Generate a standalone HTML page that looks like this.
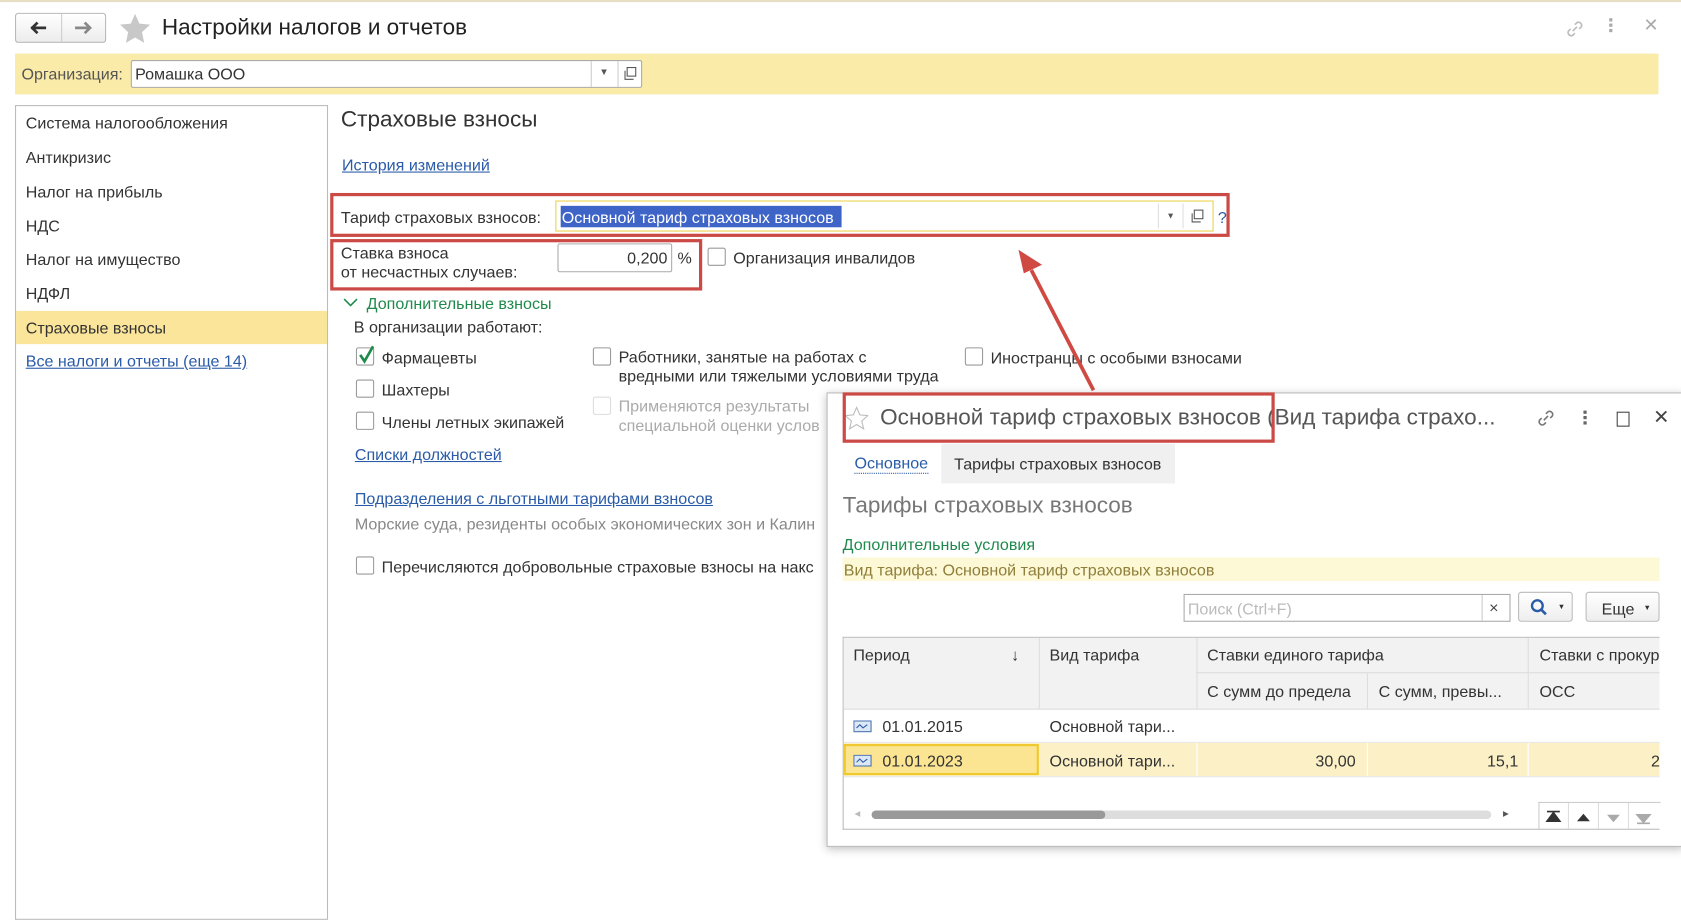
<!DOCTYPE html>
<html><head><meta charset="utf-8"><style>
html,body{margin:0;padding:0;width:1681px;height:902px;overflow:hidden;background:#fff}
#w{position:absolute;left:0;top:0;width:1568px;height:841px;transform:scale(1.07207);transform-origin:0 0;font-family:"Liberation Sans",sans-serif;color:#333;font-size:15px}
.a{position:absolute;white-space:nowrap}
.lnk{color:#2a5ba8;text-decoration:underline}
.cb{position:absolute;width:15px;height:15px;border:1px solid #9a9a9a;border-radius:2px;background:#fff}
.g{color:#1f8a4c}
.red{position:absolute;border:3px solid #cc4a45;box-sizing:border-box}
#t{position:absolute;left:0;top:1px;width:1568px;height:841px}
</style></head><body><div id="w">
<div class="a" style="left:0;top:0;width:1568px;height:2px;background:#e6dfc4"></div>
<!-- nav -->
<div class="a" style="left:14px;top:12px;width:85px;height:28px;border:1px solid #b9b9b9;border-radius:3px;background:linear-gradient(#fff,#ececec);box-sizing:border-box"></div>
<div class="a" style="left:57px;top:13px;width:1px;height:26px;background:#ccc"></div>
<svg class="a" style="left:26px;top:18px" width="20" height="16"><path d="M3 8h14M9 3L4 8l5 5" stroke="#333" stroke-width="2.5" fill="none"/></svg>
<svg class="a" style="left:67px;top:18px" width="20" height="16"><path d="M3 8h14M12 3l5 5-5 5" stroke="#888" stroke-width="2.5" fill="none"/></svg>
<svg class="a" style="left:112px;top:12px" width="28" height="28"><path d="M14 1l4 9 10 1-7.5 7 2 10L14 23l-8.5 5 2-10L0 11l10-1z" fill="#c8c8c8"/></svg>
<div id="t">
<div class="a" style="left:151px;top:13px;font-size:21px;color:#222">Настройки налогов и отчетов</div>
<svg class="a" style="left:1459px;top:16px" width="20" height="20"><path d="M8 12l4-4M6 10l-2 2a3 3 0 004 4l2-2M14 10l2-2a3 3 0 00-4-4l-2 2" stroke="#bbb" stroke-width="1.5" fill="none"/></svg>
<div class="a" style="left:1501px;top:16px;width:3px;height:3px;background:#aaa;box-shadow:0 5px #aaa,0 10px #aaa"></div>
<div class="a" style="left:1533px;top:13px;font-size:17px;color:#aaa">✕</div>
</div>
<!-- org bar -->
<div class="a" style="left:14px;top:50px;width:1533px;height:38px;background:#faeba8"></div>
<div class="a" style="left:20px;top:61px;color:#555">Организация:</div>
<div class="a" style="left:122px;top:56px;width:477px;height:26px;background:#fff;border:1px solid #aaa;box-sizing:border-box;border-radius:2px"></div>
<div class="a" style="left:126px;top:61px;color:#333">Ромашка ООО</div>
<div class="a" style="left:551px;top:57px;width:1px;height:24px;background:#ccc"></div>
<div class="a" style="left:576px;top:57px;width:1px;height:24px;background:#ccc"></div>
<div class="a" style="left:559px;top:62px;font-size:9px;color:#555">▼</div>
<svg class="a" style="left:581px;top:62px" width="14" height="14"><rect x="4" y="1" width="8" height="8" fill="none" stroke="#555"/><path d="M2 4v8h8" fill="none" stroke="#555"/></svg>
<!-- left panel -->
<div class="a" style="left:14px;top:98px;width:292px;height:760px;border:1px solid #bbb;box-sizing:border-box"></div>
<div class="a" style="left:15px;top:290px;width:290px;height:31px;background:#fae59a"></div>
<div id="t">
<div class="a" style="left:24px;top:106px">Система налогообложения</div>
<div class="a" style="left:24px;top:138px">Антикризис</div>
<div class="a" style="left:24px;top:170px">Налог на прибыль</div>
<div class="a" style="left:24px;top:202px">НДС</div>
<div class="a" style="left:24px;top:233px">Налог на имущество</div>
<div class="a" style="left:24px;top:265px">НДФЛ</div>
<div class="a" style="left:24px;top:297px">Страховые взносы</div>
<div class="a lnk" style="left:24px;top:328px">Все налоги и отчеты (еще 14)</div>
<div class="a" style="left:318px;top:99px;font-size:21px;color:#333">Страховые взносы</div>
<div class="a lnk" style="left:319px;top:145px">История изменений</div>
</div>
<!-- content -->
<div class="red" style="left:308px;top:180px;width:839px;height:41px"></div>
<div class="a" style="left:318px;top:195px">Тариф страховых взносов:</div>
<div class="a" style="left:518px;top:187px;width:614px;height:29px;border:1px solid #ecd24a;box-sizing:border-box;background:#fff"></div>
<div class="a" style="left:523px;top:192px;width:262px;height:20px;background:#3e64c7"></div>
<div class="a" style="left:524px;top:195px;color:#fff">Основной тариф страховых взносов</div>
<div class="a" style="left:1080px;top:190px;width:1px;height:23px;background:#ddd"></div>
<div class="a" style="left:1103px;top:190px;width:1px;height:23px;background:#ddd"></div>
<div class="a" style="left:1088px;top:197px;font-size:8px;color:#555">▼</div>
<svg class="a" style="left:1110px;top:195px" width="14" height="14"><rect x="4" y="1" width="8" height="8" fill="none" stroke="#555"/><path d="M2 4v8h8" fill="none" stroke="#555"/></svg>
<div class="a" style="left:1136px;top:195px;color:#2a5ba8">?</div>
<div class="red" style="left:308px;top:223px;width:347px;height:48px"></div>
<div class="a" style="left:318px;top:228px">Ставка взноса</div>
<div class="a" style="left:318px;top:246px">от несчастных случаев:</div>
<div class="a" style="left:520px;top:227px;width:107px;height:27px;border:1px solid #aaa;box-sizing:border-box;border-radius:2px"></div>
<div class="a" style="left:585px;top:233px">0,200</div>
<div class="a" style="left:632px;top:233px">%</div>
<div class="cb" style="left:660px;top:231px"></div>
<div class="a" style="left:684px;top:233px">Организация инвалидов</div>
<svg class="a" style="left:320px;top:277px" width="14" height="10"><path d="M1 2l6 6 6-6" stroke="#1f8a4c" stroke-width="1.5" fill="none"/></svg>
<div class="a g" style="left:342px;top:275px">Дополнительные взносы</div>
<div class="a" style="left:330px;top:297px">В организации работают:</div>
<div class="cb" style="left:332px;top:324px"></div>
<svg class="a" style="left:332px;top:320px" width="20" height="20"><path d="M4 11l4 6 8-14" stroke="#1f8a4c" stroke-width="2.5" fill="none"/></svg>
<div class="a" style="left:356px;top:326px">Фармацевты</div>
<div class="cb" style="left:332px;top:354px"></div>
<div class="a" style="left:356px;top:356px">Шахтеры</div>
<div class="cb" style="left:332px;top:384px"></div>
<div class="a" style="left:356px;top:386px">Члены летных экипажей</div>
<div class="cb" style="left:553px;top:324px"></div>
<div class="a" style="left:577px;top:325px;line-height:18px">Работники, занятые на работах с<br>вредными или тяжелыми условиями труда</div>
<div class="cb" style="left:553px;top:370px;border-color:#ddd"></div>
<div class="a" style="left:577px;top:371px;line-height:18px;color:#aaa">Применяются результаты<br>специальной оценки услов</div>
<div class="cb" style="left:900px;top:324px"></div>
<div class="a" style="left:924px;top:326px">Иностранцы с особыми взносами</div>
<div class="a lnk" style="left:331px;top:416px">Списки должностей</div>
<div class="a lnk" style="left:331px;top:457px">Подразделения с льготными тарифами взносов</div>
<div class="a" style="left:331px;top:481px;color:#888">Морские суда, резиденты особых экономических зон и Калин</div>
<div class="cb" style="left:332px;top:519px"></div>
<div class="a" style="left:356px;top:521px">Перечисляются добровольные страховые взносы на накс</div>
<!-- dialog -->
<div class="a" style="left:771px;top:366px;width:800px;height:424px;background:#fff;border:1px solid #bbb;box-sizing:border-box;box-shadow:0 2px 8px rgba(0,0,0,.25)"></div>
<svg class="a" style="left:788px;top:379px" width="22" height="22"><path d="M11 1l3 7 7.5.7-5.7 5 1.8 7.3L11 17l-6.6 4 1.8-7.3L.5 8.7 8 8z" fill="none" stroke="#bbb"/></svg>
<div class="a" style="left:821px;top:378px;font-size:21px;color:#555">Основной тариф страховых взносов (Вид тарифа страхо...</div>
<div class="red" style="left:786px;top:366px;width:403px;height:47px"></div>
<svg class="a" style="left:1432px;top:380px" width="20" height="20"><path d="M8 12l4-4M6 10l-2 2a3 3 0 004 4l2-2M14 10l2-2a3 3 0 00-4-4l-2 2" stroke="#777" stroke-width="1.5" fill="none"/></svg>
<div class="a" style="left:1477px;top:383px;width:3px;height:3px;background:#666;box-shadow:0 5px #666,0 10px #666"></div>
<div class="a" style="left:1508px;top:384px;width:10px;height:12px;border:1.5px solid #444"></div>
<div class="a" style="left:1542px;top:379px;font-size:18px;color:#444">✕</div>
<div class="a" style="left:878px;top:414px;width:218px;height:37px;background:#f0f0f0"></div>
<div class="a" style="left:797px;top:425px;color:#2a5ba8;border-bottom:1px dotted #2a5ba8;line-height:16px">Основное</div>
<div class="a" style="left:890px;top:425px;color:#333">Тарифы страховых взносов</div>
<div class="a" style="left:786px;top:460px;font-size:21px;color:#777">Тарифы страховых взносов</div>
<div class="a g" style="left:786px;top:500px">Дополнительные условия</div>
<div class="a" style="left:786px;top:520px;width:762px;height:22px;background:#fdf8d6"></div>
<div class="a" style="left:787px;top:524px;color:#8f7f3a">Вид тарифа: Основной тариф страховых взносов</div>
<div class="a" style="left:1104px;top:554px;width:305px;height:26px;border:1px solid #aaa;box-sizing:border-box"></div>
<div class="a" style="left:1382px;top:555px;width:1px;height:24px;background:#ccc"></div>
<div class="a" style="left:1108px;top:560px;color:#bbb">Поиск (Ctrl+F)</div>
<div class="a" style="left:1389px;top:559px;color:#444">×</div>
<div class="a" style="left:1416px;top:552px;width:51px;height:28px;border:1px solid #bbb;border-radius:3px;box-sizing:border-box;background:linear-gradient(#fff,#eee)"></div>
<svg class="a" style="left:1427px;top:558px" width="18" height="18"><circle cx="7" cy="7" r="5" stroke="#2a5ba8" stroke-width="2.2" fill="none"/><path d="M10 10l5 5" stroke="#2a5ba8" stroke-width="2.5"/></svg>
<div class="a" style="left:1453px;top:563px;font-size:7px">▼</div>
<div class="a" style="left:1479px;top:552px;width:69px;height:28px;border:1px solid #bbb;border-radius:3px;box-sizing:border-box;background:linear-gradient(#fff,#eee)"></div>
<div class="a" style="left:1494px;top:560px">Еще</div>
<div class="a" style="left:1533px;top:564px;font-size:7px">▼</div>
<!-- table -->
<div class="a" style="left:786px;top:594px;width:762px;height:180px;border:1px solid #bbb;border-right:none;box-sizing:border-box"></div>
<div class="a" style="left:787px;top:595px;width:761px;height:66px;background:#f2f2f2;border-bottom:1px solid #ddd"></div>
<div class="a" style="left:969px;top:595px;width:1px;height:66px;background:#ddd"></div>
<div class="a" style="left:1116px;top:595px;width:1px;height:66px;background:#ddd"></div>
<div class="a" style="left:1425px;top:595px;width:1px;height:66px;background:#ddd"></div>
<div class="a" style="left:1116px;top:627px;width:432px;height:1px;background:#ddd"></div>
<div class="a" style="left:1275px;top:628px;width:1px;height:33px;background:#ddd"></div>
<div class="a" style="left:796px;top:603px">Период</div>
<div class="a" style="left:943px;top:603px">↓</div>
<div class="a" style="left:979px;top:603px">Вид тарифа</div>
<div class="a" style="left:1126px;top:603px">Ставки единого тарифа</div>
<div class="a" style="left:1436px;top:603px">Ставки с прокур</div>
<div class="a" style="left:1126px;top:637px">С сумм до предела</div>
<div class="a" style="left:1286px;top:637px">С сумм, превы...</div>
<div class="a" style="left:1436px;top:637px">ОСС</div>
<div class="a" style="left:787px;top:692px;width:761px;height:1px;background:#e6e6e6"></div>
<svg class="a" style="left:796px;top:672px" width="18" height="12"><rect x=".5" y=".5" width="16" height="10" fill="#dde8f6" stroke="#4a72b0"/><path d="M3 7l3-3 3 3 4-3" stroke="#2a5ba8" fill="none"/></svg>
<div class="a" style="left:823px;top:670px">01.01.2015</div>
<div class="a" style="left:979px;top:670px">Основной тари...</div>
<div class="a" style="left:787px;top:693px;width:761px;height:31px;background:#fcf1c6"></div>
<div class="a" style="left:787px;top:694px;width:182px;height:29px;background:#fbe592;border:2px solid #f0c830;box-sizing:border-box"></div>
<div class="a" style="left:1116px;top:693px;width:1px;height:31px;background:#fff"></div>
<div class="a" style="left:1275px;top:693px;width:1px;height:31px;background:#fff"></div>
<div class="a" style="left:1425px;top:693px;width:1px;height:31px;background:#fff"></div>
<svg class="a" style="left:796px;top:704px" width="18" height="12"><rect x=".5" y=".5" width="16" height="10" fill="#dde8f6" stroke="#4a72b0"/><path d="M3 7l3-3 3 3 4-3" stroke="#2a5ba8" fill="none"/></svg>
<div class="a" style="left:823px;top:702px">01.01.2023</div>
<div class="a" style="left:979px;top:702px">Основной тари...</div>
<div class="a" style="left:1227px;top:702px">30,00</div>
<div class="a" style="left:1387px;top:702px">15,1</div>
<div class="a" style="left:1540px;top:702px">2</div>
<div class="a" style="left:787px;top:724px;width:761px;height:1px;background:#e6e6e6"></div>
<div class="a" style="left:797px;top:755px;font-size:7px;color:#bbb">◀</div>
<div class="a" style="left:813px;top:756px;width:578px;height:8px;border-radius:4px;background:#ddd"></div>
<div class="a" style="left:813px;top:756px;width:218px;height:8px;border-radius:4px;background:#999"></div>
<div class="a" style="left:1402px;top:755px;font-size:7px;color:#555">▶</div>
<div class="a" style="left:1435px;top:748px;width:113px;height:25px;border-left:1px solid #ccc;border-top:1px solid #ccc"></div>
<svg class="a" style="left:1435px;top:748px" width="113" height="25"><path d="M8 9h12M14 10l-6 8h12z" fill="#333" stroke="#333" stroke-width="1.5"/><path d="M42 11l-6 7h12z" fill="#333"/><path d="M64 12h12l-6 7z" fill="#aaa"/><path d="M92 12h12l-6 7z M92 20h12" fill="#aaa" stroke="#aaa" stroke-width="1.5"/><path d="M28 1v24M56 1v24M84 1v24" stroke="#ddd"/></svg>
<!-- arrow -->
<svg class="a" style="left:0;top:0" width="1568" height="841"><path d="M1020 364L962 252" stroke="#d04a44" stroke-width="3.5"/><path d="M950 233l22 14-17 8z" fill="#d04a44"/></svg>
</div></body></html>
